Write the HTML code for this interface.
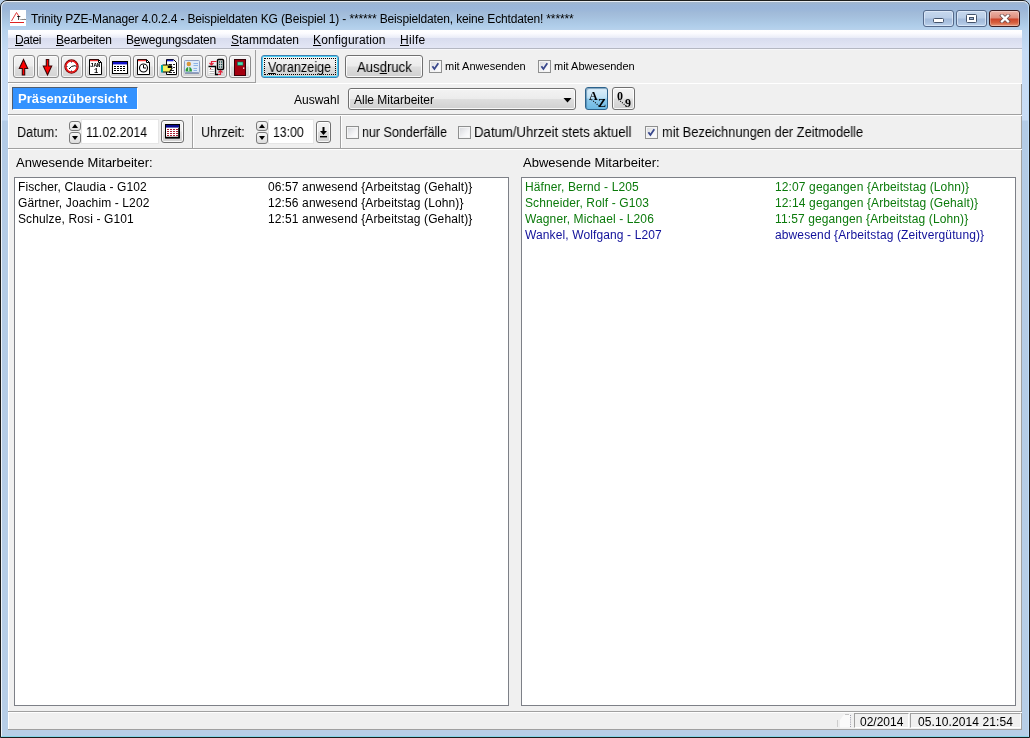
<!DOCTYPE html>
<html lang="de">
<head>
<meta charset="utf-8">
<title>Trinity PZE-Manager</title>
<style>
html,body{margin:0;padding:0;}
body{width:1030px;height:738px;overflow:hidden;position:relative;background:#b5cde9;font-family:"Liberation Sans",sans-serif;font-size:13px;color:#000;}
div,span,svg{position:absolute;}
u{text-decoration:underline;text-underline-offset:1px;}
#frame{left:0;top:0;width:1030px;height:738px;box-sizing:border-box;border:1px solid #1c1c1c;border-radius:7px 7px 0 0;background:linear-gradient(180deg,#a2b5cc 0,#a0b5cf 2px,#99b4d8 4px,#9ab5d9 8px,#a1bbd9 12px,#a7c3e0 18px,#b0ceea 25px,#b8d2ec 29px,#c6dbf4 50px,#c8dcf5 119px,#b3cbe6 120px,#b7cee7 100%);}
#frameinner{left:1px;top:1px;width:1026px;height:734px;border:1px solid rgba(255,255,255,.75);border-radius:6px 6px 0 0;border-right-color:#bddcf8;border-bottom-color:#86d4e6;}
#title{left:30.5px;top:11px;font-size:12px;line-height:16px;white-space:nowrap;color:#000;letter-spacing:-0.15px;}
#client{left:8px;top:30px;width:1014px;height:700px;background:#f0f0f0;}
#menubar{left:8px;top:30px;width:1014px;height:18px;background:linear-gradient(180deg,#ffffff 0,#fcfcff 18%,#eaedf8 42%,#d9ddef 47%,#dbdff0 60%,#e3e6f5 100%);}
.mi{top:32px;font-size:12px;line-height:16px;white-space:nowrap;}
.h{left:8px;width:1014px;height:1px;}
.v{width:1px;}
.gr{background:#a0a0a0;}
.wh{background:#fff;}
.tb{top:55px;width:20px;height:21px;border:1px solid #8b8b8b;border-radius:3px;background:linear-gradient(180deg,#f3f3f3 0,#ececec 48%,#dfdfdf 52%,#d3d3d3 100%);box-shadow:inset 0 0 0 1px rgba(255,255,255,.7);}
.tb svg{left:0;top:0;}
.btn{border:1px solid #707070;border-radius:3px;background:linear-gradient(180deg,#f3f3f3 0,#ececec 48%,#dedede 52%,#d0d0d0 100%);box-shadow:inset 0 0 0 1px rgba(255,255,255,.85);text-align:center;white-space:nowrap;box-sizing:border-box;}
.cb{width:11px;height:11px;border:1px solid #8e8f8f;background:linear-gradient(135deg,#d4d6da 0,#f4f4f6 60%,#fff 100%);box-shadow:inset 0 0 0 1px #f4f4f4;}
.cb svg{left:0;top:0;}
.t{white-space:nowrap;}
.t,.mi,.row{will-change:transform;}
.sx{font-size:14px;line-height:17px;transform-origin:0 0;}
.t13{font-size:13px;line-height:16px;}
.t12{font-size:12px;line-height:16px;}
.list{background:#fff;border:1px solid #7d8087;box-sizing:border-box;}
.row{left:3px;white-space:nowrap;font-size:12px;line-height:16px;height:16px;letter-spacing:0.12px;}
.row span{left:250px;top:0;}
.g{color:#0b7a0b;}
.b{color:#10109a;}
.sp{width:12px;border:1px solid #7a7a7a;border-radius:3px;background:linear-gradient(180deg,#f6f6f6,#dcdcdc);box-sizing:border-box;}
.cap{top:10px;width:29px;height:14.5px;border:1px solid #54698a;border-radius:3px;box-shadow:inset 0 0 0 1px rgba(235,244,255,.6);background:linear-gradient(180deg,#c6d8ee 0,#bacee8 48%,#a3bbdb 52%,#a9c1df 75%,#bdd4ee 100%);}
</style>
</head>
<body>
<div id="frame"></div>
<div id="frameinner"></div>

<!-- app icon -->
<div style="left:10px;top:10px;width:16px;height:16px;background:#fff;"></div>
<svg style="left:10px;top:10px" width="16" height="16" viewBox="0 0 16 16"><path d="M1.5 11 L6.5 2.5 L9 6.5" fill="none" stroke="#e23a3a" stroke-width="1"/><path d="M0 12.5 H14" stroke="#d22" stroke-width="1"/></svg>
<div style="left:10px;top:10px;width:16px;height:16px;overflow:hidden;"><div class="t" style="left:6.5px;top:5px;font-size:5.5px;line-height:7px;font-weight:bold;">T<span style="position:static;font-size:2.3px;">rinity</span></div></div>

<div id="title" class="t">Trinity PZE-Manager 4.0.2.4 - Beispieldaten KG (Beispiel 1) - ****** Beispieldaten, keine Echtdaten! ******</div>

<!-- caption buttons -->
<div class="cap" style="left:923px;"><div style="left:9px;top:7px;width:9px;height:3px;background:#fff;border:1px solid #43536b;border-radius:1.5px;"></div></div>
<div class="cap" style="left:956px;"><div style="left:9px;top:3px;width:9px;height:7px;background:#fff;border:1px solid #43536b;border-radius:1.5px;"></div><div style="left:12px;top:6px;width:3px;height:1px;background:#9fb4d2;border:1px solid #43536b;"></div></div>
<div class="cap" style="left:989px;border-color:#4a1d1d;background:linear-gradient(180deg,#ecb4a8 0,#de8c7b 48%,#cd4329 52%,#d5603f 78%,#e8987a 100%);box-shadow:inset 0 0 0 1px rgba(255,255,255,.3);border-color:#3a1c20;">
<svg style="left:9px;top:3px" width="12" height="9" viewBox="0 0 12 9"><path d="M3 1.7 L9 7.3 M9 1.7 L3 7.3" stroke="#6a4a4a" stroke-width="3.8" stroke-linecap="square"/><path d="M3 1.7 L9 7.3 M9 1.7 L3 7.3" stroke="#fff" stroke-width="2.3" stroke-linecap="square"/></svg></div>

<div id="client"></div>
<div id="menubar"></div>
<div class="mi" style="left:15px;letter-spacing:-0.4px"><u>D</u>atei</div>
<div class="mi" style="left:56px;letter-spacing:-0.25px"><u>B</u>earbeiten</div>
<div class="mi" style="left:126px;letter-spacing:-0.2px">B<u>e</u>wegungsdaten</div>
<div class="mi" style="left:231px;"><u>S</u>tammdaten</div>
<div class="mi" style="left:313px;letter-spacing:0.15px"><u>K</u>onfiguration</div>
<div class="mi" style="left:400px;letter-spacing:0.3px"><u>H</u>ilfe</div>
<div class="h" style="top:48px;background:#b4b7c2"></div>
<div class="h" style="top:49px;background:#f7f7fa"></div>

<!-- toolbar icon panel -->
<div class="h gr" style="top:82px;width:248px;"></div>
<div class="v gr" style="left:255px;top:50px;height:33px;"></div>
<div class="v wh" style="left:8px;top:50px;height:32px;"></div>
<div class="h wh" style="top:83px;"></div>

<div class="tb" style="left:13px"><svg width="20" height="21" viewBox="0 0 20 21"><path d="M9.5 3.5 L13.7 12.5 H10.7 V19 H8.3 V12.5 H5.3 Z" fill="#f00" stroke="#3a0606" stroke-width="1.1" stroke-linejoin="miter"/></svg></div>
<div class="tb" style="left:37px"><svg width="20" height="21" viewBox="0 0 20 21"><path d="M8.3 3.5 H10.7 V10 H13.7 L9.5 19 L5.3 10 H8.3 Z" fill="#f00" stroke="#3a0606" stroke-width="1.1"/></svg></div>
<div class="tb" style="left:61px"><svg width="20" height="21" viewBox="0 0 20 21"><circle cx="9.5" cy="10.5" r="6.6" fill="#fff" stroke="#6a0000" stroke-width="1.2"/><circle cx="9.5" cy="10.5" r="5.6" fill="none" stroke="#f01010" stroke-width="1.5"/><path d="M9.5 10.5 L13.5 9.5 M9.5 10.5 L7 13" stroke="#111" stroke-width="1"/><path d="M9.5 5.5v1M9.5 14.5v1M4.5 10.5h1M13.5 10.5h1" stroke="#123" stroke-width="1"/></svg></div>
<div class="tb" style="left:85px"><svg style="top:-1px" width="20" height="21" viewBox="0 0 20 21"><path d="M3.5 4.5 H12.5 L15.5 7.5 V19.5 H3.5 Z" fill="#fff" stroke="#000" stroke-width="1"/><path d="M4 5.5 H12.5" stroke="#e33" stroke-width="1.4"/><path d="M12.5 4.5 V7.5 H15.5" fill="none" stroke="#000" stroke-width="1"/></svg><div class="t" style="left:4px;top:7px;font-family:'Liberation Mono',monospace;font-weight:bold;font-size:6px;line-height:6px;letter-spacing:-0.2px;">JAN</div><div class="t" style="left:8px;top:12px;font-family:'Liberation Mono',monospace;font-weight:bold;font-size:7px;line-height:6px;">1</div></div>
<div class="tb" style="left:109px"><svg style="top:-1px" width="20" height="21" viewBox="0 0 20 21"><rect x="2.5" y="6.5" width="15" height="12" fill="#fff" stroke="#000"/><rect x="3" y="7" width="14" height="2.4" fill="#1010c8"/><path d="M4 11.5h12M4 13.5h12M4 15.5h12" stroke="#000" stroke-width="1.2" stroke-dasharray="2 1"/></svg></div>
<div class="tb" style="left:133px"><svg style="top:-1px" width="20" height="21" viewBox="0 0 20 21"><path d="M3.5 4.5 H12.5 L15.5 7.5 V19.5 H3.5 Z" fill="#fff" stroke="#000" stroke-width="1"/><path d="M4 5.5 H12.5" stroke="#e33" stroke-width="1.4"/><path d="M12.5 4.5 V7.5 H15.5" fill="none" stroke="#000"/><circle cx="9.5" cy="13" r="4" fill="#fff" stroke="#000" stroke-width="1.1"/><path d="M9.5 10 V13 H12" fill="none" stroke="#000" stroke-width="1"/></svg></div>
<div class="tb" style="left:157px"><svg style="top:-1px" width="20" height="21" viewBox="0 0 20 21"><path d="M8.5 4.5 H15.5 L18.5 7.5 V19.5 H8.5 Z" fill="#fff" stroke="#000"/><path d="M9 5.5 H15.5" stroke="#22c" stroke-width="1.6"/><path d="M11 9.5h6M11 12.5h6M13 15.5h4M11 17.5h6" stroke="#222" stroke-width="1" stroke-dasharray="3 1"/><path d="M4.5 10 H11 Q14 10 14 11.5 H10 V12.5 H14 V14 H13 V15.5 H12 V17 H4.5 Z" fill="#f4ef5a" stroke="#000" stroke-width="1"/><rect x="3" y="10" width="2" height="7.5" fill="#0aa"/></svg></div>
<div class="tb" style="left:181px"><svg style="top:-1px" width="20" height="21" viewBox="0 0 20 21"><rect x="2.5" y="5.5" width="15" height="12" rx="1" fill="#dfeaf8" stroke="#8ea0c4"/><path d="M3 18.5 H17" stroke="#8e98b0" stroke-width="1"/><circle cx="6.8" cy="9" r="2.2" fill="#d9963a"/><path d="M3.5 16.5 Q3.5 12 6.8 12 Q10 12 10 16.5 Z" fill="#2a9a3a"/><path d="M6.8 12 V16" stroke="#fff" stroke-width="1"/><path d="M11.5 8.5h4.5M11.5 10.5h4.5M11.5 13.5h3.5M11.5 15.5h3.5" stroke="#8db4e6" stroke-width="1"/></svg></div>
<div class="tb" style="left:205px"><svg width="20" height="21" viewBox="0 0 20 21"><rect x="11.5" y="3.5" width="6" height="10" rx="1" fill="#ddd" stroke="#000" stroke-width="1.4"/><path d="M13 6h1.2M15 6h1.2M13 8.5h1.2M15 8.5h1.2M13 11h1.2M15 11h1.2" stroke="#255" stroke-width="1.3"/><path d="M2.5 10.5 H9.5 V18.5 H2.5" fill="#fff"/><path d="M2.5 10.5 H9.5 V18.5 H12" fill="none" stroke="#000" stroke-width="1.3"/><path d="M3.5 13.5h4M3.5 15.5h5M3.5 17.5h5" stroke="#b8b8b8" stroke-width="1"/><path d="M4 12.5h1" stroke="#d22" stroke-width="1"/><path d="M10.5 5.5 H5.5 V9 M3.5 7 L5.5 9 L7.5 7" fill="none" stroke="#e0223a" stroke-width="1.2"/><path d="M12 18.5 H14.5 V15 M12.5 16.5 L14.5 14.5 L16.5 16.5" fill="none" stroke="#e0223a" stroke-width="1.2"/></svg></div>
<div class="tb" style="left:229px"><svg width="20" height="21" viewBox="0 0 20 21"><rect x="4.5" y="3.5" width="11" height="16" fill="#a40010" stroke="#3a0008" stroke-width="1"/><rect x="7.5" y="6" width="5.5" height="3.2" fill="#4fe0b0" stroke="#0a6a5a" stroke-width=".6"/><rect x="13" y="11.5" width="1.3" height="1.3" fill="#fff"/></svg></div>

<!-- Voranzeige / Ausdruck -->
<div class="btn" style="left:261px;top:55px;width:78px;height:23px;border-color:#3c7fb1;box-shadow:inset 0 0 0 1px #48d0f5;"><div class="t sx" style="left:6px;top:3px;transform:scaleX(.9);"><u>V</u>oranzeige</div><div style="left:2px;top:2px;width:70px;height:15px;border:1px dotted #000;"></div></div>
<div class="btn" style="left:345px;top:55px;width:78px;height:23px;"><div class="t sx" style="left:11px;top:3px;transform:scaleX(.94);">Aus<u>d</u>ruck</div></div>
<div class="cb" style="left:429px;top:60px"><svg width="11" height="11" viewBox="0 0 11 11"><path d="M2.4 5.3 L4.4 8 L8.3 2.3" fill="none" stroke="#38478c" stroke-width="1.8"/></svg></div>
<div class="t" style="left:445px;top:59px;font-size:11px;line-height:15px;">mit Anwesenden</div>
<div class="cb" style="left:538px;top:60px"><svg width="11" height="11" viewBox="0 0 11 11"><path d="M2.4 5.3 L4.4 8 L8.3 2.3" fill="none" stroke="#38478c" stroke-width="1.8"/></svg></div>
<div class="t" style="left:554px;top:59px;font-size:11px;line-height:15px;">mit Abwesenden</div>

<!-- header row -->
<div class="v gr" style="left:1021px;top:84px;height:645px;"></div>
<div class="v wh" style="left:8px;top:84px;height:645px;"></div>
<div style="left:12px;top:87px;width:126px;height:23px;box-sizing:border-box;background:#3392ff;border:1px solid;border-color:#4f5d70 #fff #fff #4f5d70;"></div>
<div class="t" style="left:18px;top:90px;font-size:13px;font-weight:bold;color:#fff;line-height:17px;letter-spacing:0.07px;">Präsenzübersicht</div>
<div class="t t12" style="left:294px;top:92px;">Auswahl</div>
<div class="btn" style="left:348px;top:88px;width:228px;height:22px;"></div>
<div class="t t12" style="left:354px;top:92px;">Alle Mitarbeiter</div>
<svg style="left:563px;top:98px" width="9" height="5"><path d="M0.5 0 H8.5 L4.5 4.5 Z" fill="#000"/></svg>
<div class="btn" style="left:585px;top:87px;width:23px;height:23px;border-color:#2c628b;background:linear-gradient(180deg,#dff0fa 0,#c0e2f5 45%,#8cc9ec 55%,#6db9e3 100%);box-shadow:inset 1px 1px 1px rgba(60,110,150,.6);">
  <div class="t" style="left:3px;top:2px;font-family:'Liberation Serif',serif;font-weight:bold;font-size:12px;line-height:12px;">A</div>
  <div class="t" style="left:12px;top:9px;font-family:'Liberation Serif',serif;font-weight:bold;font-size:12px;line-height:12px;">Z</div>
  <svg style="left:0;top:0" width="21" height="21"><path d="M5.5 11.5 L13 18" stroke="#000" stroke-width="1.1" stroke-dasharray="1 1.3"/></svg>
</div>
<div class="btn" style="left:612px;top:87px;width:23px;height:23px;">
  <div class="t" style="left:4px;top:2px;font-family:'Liberation Serif',serif;font-weight:bold;font-size:12px;line-height:12px;">0</div>
  <div class="t" style="left:12px;top:9px;font-family:'Liberation Serif',serif;font-weight:bold;font-size:12px;line-height:12px;">9</div>
  <svg style="left:0;top:0" width="21" height="21"><path d="M5.5 11.5 L13 18" stroke="#000" stroke-width="1.1" stroke-dasharray="1 1.3"/></svg>
</div>
<div class="h gr" style="top:114px;"></div>
<div class="h wh" style="top:115px;"></div>

<!-- date row -->
<div class="v gr" style="left:192px;top:116px;height:32px;"></div>
<div class="v wh" style="left:193px;top:116px;height:32px;"></div>
<div class="v gr" style="left:340px;top:116px;height:32px;"></div>
<div class="v wh" style="left:341px;top:116px;height:32px;"></div>

<div class="t sx" style="left:17px;top:124px;transform:scaleX(.905);">Datum:</div>
<div class="sp" style="left:69px;top:121px;height:10px;"><div style="left:1.5px;top:2px;width:0;height:0;border-left:3.5px solid transparent;border-right:3.5px solid transparent;border-bottom:4px solid #000;"></div></div>
<div class="sp" style="left:69px;top:132px;height:12px;"><div style="left:1.5px;top:3px;width:0;height:0;border-left:3.5px solid transparent;border-right:3.5px solid transparent;border-top:4px solid #000;"></div></div>
<div style="left:82px;top:120px;width:76px;height:23px;background:#fff;box-shadow:0 0 0 1px #e6e6e6;"></div>
<div class="t sx" style="left:86px;top:124px;transform:scaleX(.885);">11.02.2014</div>
<div class="btn" style="left:161px;top:120px;width:23px;height:23px;"><svg style="left:3px;top:3px" width="15" height="15" viewBox="0 0 15 15"><rect x=".5" y=".5" width="14" height="13.5" fill="#fff" stroke="#000"/><rect x="1" y="1" width="13" height="2.6" fill="#0a0a90"/><path d="M2 5.5h11.5M2 7.5h11.5M2 9.5h11.5M2 11.5h11.5" stroke="#a23" stroke-width="1.1" stroke-dasharray="2 1"/><path d="M1 13.5 H14 M14 4 V14" stroke="#000" stroke-width="1.6"/></svg></div>

<div class="t sx" style="left:201px;top:124px;transform:scaleX(.906);">Uhrzeit:</div>
<div class="sp" style="left:256px;top:121px;height:10px;"><div style="left:1.5px;top:2px;width:0;height:0;border-left:3.5px solid transparent;border-right:3.5px solid transparent;border-bottom:4px solid #000;"></div></div>
<div class="sp" style="left:256px;top:132px;height:12px;"><div style="left:1.5px;top:3px;width:0;height:0;border-left:3.5px solid transparent;border-right:3.5px solid transparent;border-top:4px solid #000;"></div></div>
<div style="left:269px;top:120px;width:44px;height:23px;background:#fff;box-shadow:0 0 0 1px #e6e6e6;"></div>
<div class="t sx" style="left:273px;top:124px;transform:scaleX(.875);">13:00</div>
<div class="btn" style="left:316px;top:121px;width:15px;height:22px;"><svg style="left:2px;top:5px" width="9" height="11" viewBox="0 0 9 11"><path d="M3.5 0 H5.5 V4 H8 L4.5 8 L1 4 H3.5 Z" fill="#000"/><path d="M1 9.7 H8" stroke="#000" stroke-width="1.4"/></svg></div>

<div class="cb" style="left:346px;top:126px"></div>
<div class="t sx" style="left:362px;top:124px;transform:scaleX(.895);">nur Sonderfälle</div>
<div class="cb" style="left:458px;top:126px"></div>
<div class="t sx" style="left:474px;top:124px;transform:scaleX(.941);">Datum/Uhrzeit stets aktuell</div>
<div class="cb" style="left:645px;top:126px"><svg width="11" height="11" viewBox="0 0 11 11"><path d="M2.4 5.3 L4.4 8 L8.3 2.3" fill="none" stroke="#38478c" stroke-width="1.8"/></svg></div>
<div class="t sx" style="left:662px;top:124px;transform:scaleX(.916);">mit Bezeichnungen der Zeitmodelle</div>

<div class="h gr" style="top:148px;"></div>
<div class="h wh" style="top:149px;"></div>

<!-- lists -->
<div class="t t13" style="left:16px;top:155px;">Anwesende Mitarbeiter:</div>
<div class="list" style="left:14px;top:177px;width:495px;height:529px;">
  <div class="row" style="top:1px">Fischer, Claudia - G102<span>06:57 anwesend {Arbeitstag (Gehalt)}</span></div>
  <div class="row" style="top:17px">Gärtner, Joachim - L202<span>12:56 anwesend {Arbeitstag (Lohn)}</span></div>
  <div class="row" style="top:33px">Schulze, Rosi - G101<span>12:51 anwesend {Arbeitstag (Gehalt)}</span></div>
</div>
<div class="t t13" style="left:523px;top:155px;">Abwesende Mitarbeiter:</div>
<div class="list" style="left:521px;top:177px;width:495px;height:529px;">
  <div class="row g" style="top:1px">Häfner, Bernd - L205<span>12:07 gegangen {Arbeitstag (Lohn)}</span></div>
  <div class="row g" style="top:17px">Schneider, Rolf - G103<span>12:14 gegangen {Arbeitstag (Gehalt)}</span></div>
  <div class="row g" style="top:33px">Wagner, Michael - L206<span>11:57 gegangen {Arbeitstag (Lohn)}</span></div>
  <div class="row b" style="top:49px">Wankel, Wolfgang - L207<span>abwesend {Arbeitstag (Zeitvergütung)}</span></div>
</div>

<!-- status bar -->
<div class="h gr" style="top:711px;"></div>
<div class="h wh" style="top:712px;"></div>
<div class="h gr" style="top:729px;"></div>
<div style="left:854px;top:713px;width:55px;height:15px;box-sizing:border-box;border:1px solid;border-color:#a0a0a0 #fff #fff #a0a0a0;"></div>
<div style="left:910px;top:713px;width:111px;height:15px;box-sizing:border-box;border:1px solid;border-color:#a0a0a0 #fff #fff #a0a0a0;"></div>
<div class="t t12" style="left:860px;top:714px;">02/2014</div>
<div class="t t12" style="left:918px;top:714px;letter-spacing:0.1px;">05.10.2014 21:54</div>
<svg style="left:836px;top:713px" width="16" height="15"><path d="M4 14.5 V7 L8 1.5 H14 V14.5 Z" fill="#fafafa"/><path d="M1.5 7 V14" stroke="#cdcdcd" stroke-width="1"/><path d="M14.5 2 V14" stroke="#9a9aa8" stroke-width="1" stroke-dasharray="1 1.2"/><path d="M9 1.5 H13" stroke="#c4c4c4" stroke-width="1"/></svg>
</body>
</html>
